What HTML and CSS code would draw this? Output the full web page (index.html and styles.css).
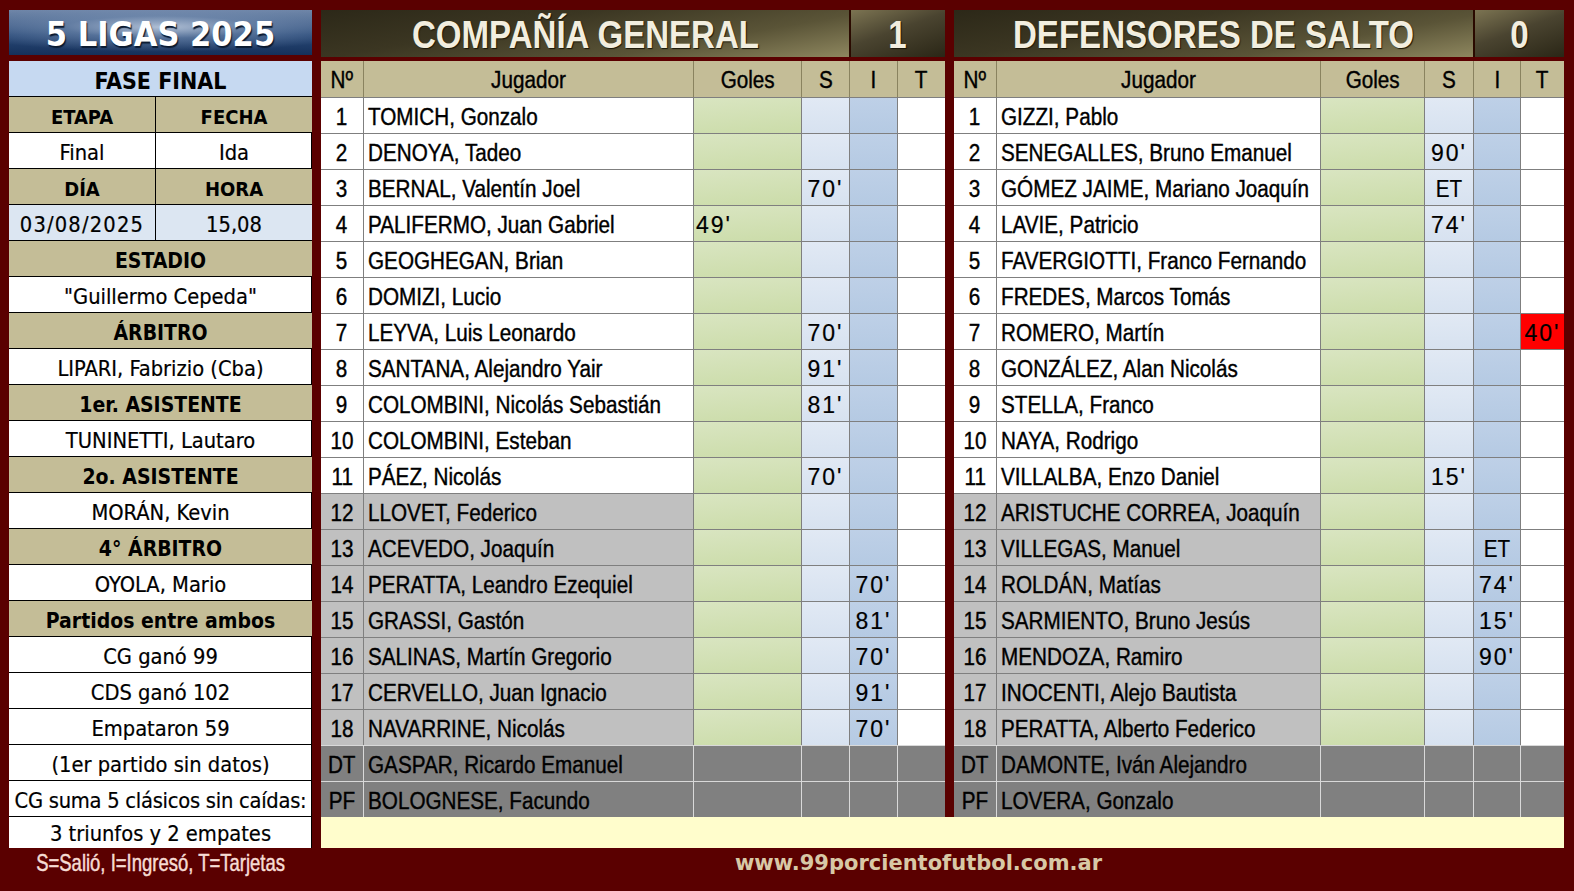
FILE: index.html
```html
<!DOCTYPE html>
<html lang="es">
<head>
<meta charset="utf-8">
<title>5 LIGAS 2025 - Compañía General vs Defensores de Salto</title>
<link rel="stylesheet" href="styles.css">
</head>
<body>
<div class="sheet">
  <div class="title-main">5 LIGAS 2025</div>

  <div class="team-head cols-a">
    <div class="team-name"><span class="nw">COMPAÑÍA GENERAL</span></div>
    <div class="team-score"><span class="nw">1</span></div>
  </div>

  <div class="team-head cols-b">
    <div class="team-name"><span class="nw">DEFENSORES DE SALTO</span></div>
    <div class="team-score"><span class="nw">0</span></div>
  </div>

  <div class="info">
    <div class="ic full blue bold big">FASE FINAL</div>
    <div class="ic tan bold mid sep">ETAPA</div><div class="ic tan bold mid">FECHA</div>
    <div class="ic sep">Final</div><div class="ic">Ida</div>
    <div class="ic tan bold mid sep">DÍA</div><div class="ic tan bold mid">HORA</div>
    <div class="ic pale sep date">03/08/2025</div><div class="ic pale">15,08</div>
    <div class="ic full tan bold">ESTADIO</div>
    <div class="ic full">"Guillermo Cepeda"</div>
    <div class="ic full tan bold">ÁRBITRO</div>
    <div class="ic full">LIPARI, Fabrizio (Cba)</div>
    <div class="ic full tan bold">1er. ASISTENTE</div>
    <div class="ic full">TUNINETTI, Lautaro</div>
    <div class="ic full tan bold">2o. ASISTENTE</div>
    <div class="ic full">MORÁN, Kevin</div>
    <div class="ic full tan bold">4° ÁRBITRO</div>
    <div class="ic full">OYOLA, Mario</div>
    <div class="ic full tan bold">Partidos entre ambos</div>
    <div class="ic full">CG ganó 99</div>
    <div class="ic full">CDS ganó 102</div>
    <div class="ic full">Empataron 59</div>
    <div class="ic full">(1er partido sin datos)</div>
    <div class="ic full tight">CG suma 5 clásicos sin caídas:</div>
    <div class="ic full last">3 triunfos y 2 empates</div>
  </div>

  <div class="roster cols-a">
    <div class="row head"><div class="c"><span class="nw">Nº</span></div><div class="c"><span class="nw">Jugador</span></div><div class="c"><span class="nw">Goles</span></div><div class="c"><span class="nw">S</span></div><div class="c"><span class="nw">I</span></div><div class="c"><span class="nw">T</span></div></div>
    <div class="row"><div class="c n"><span class="nw">1</span></div><div class="c p"><span class="nw">TOMICH, Gonzalo</span></div><div class="c g"></div><div class="c s"></div><div class="c i"></div><div class="c t"></div></div>
    <div class="row"><div class="c n"><span class="nw">2</span></div><div class="c p"><span class="nw">DENOYA, Tadeo</span></div><div class="c g"></div><div class="c s"></div><div class="c i"></div><div class="c t"></div></div>
    <div class="row"><div class="c n"><span class="nw">3</span></div><div class="c p"><span class="nw">BERNAL, Valentín Joel</span></div><div class="c g"></div><div class="c s">70'</div><div class="c i"></div><div class="c t"></div></div>
    <div class="row"><div class="c n"><span class="nw">4</span></div><div class="c p"><span class="nw">PALIFERMO, Juan Gabriel</span></div><div class="c g">49'</div><div class="c s"></div><div class="c i"></div><div class="c t"></div></div>
    <div class="row"><div class="c n"><span class="nw">5</span></div><div class="c p"><span class="nw">GEOGHEGAN, Brian</span></div><div class="c g"></div><div class="c s"></div><div class="c i"></div><div class="c t"></div></div>
    <div class="row"><div class="c n"><span class="nw">6</span></div><div class="c p"><span class="nw">DOMIZI, Lucio</span></div><div class="c g"></div><div class="c s"></div><div class="c i"></div><div class="c t"></div></div>
    <div class="row"><div class="c n"><span class="nw">7</span></div><div class="c p"><span class="nw">LEYVA, Luis Leonardo</span></div><div class="c g"></div><div class="c s">70'</div><div class="c i"></div><div class="c t"></div></div>
    <div class="row"><div class="c n"><span class="nw">8</span></div><div class="c p"><span class="nw">SANTANA, Alejandro Yair</span></div><div class="c g"></div><div class="c s">91'</div><div class="c i"></div><div class="c t"></div></div>
    <div class="row"><div class="c n"><span class="nw">9</span></div><div class="c p"><span class="nw">COLOMBINI, Nicolás Sebastián</span></div><div class="c g"></div><div class="c s">81'</div><div class="c i"></div><div class="c t"></div></div>
    <div class="row"><div class="c n"><span class="nw">10</span></div><div class="c p"><span class="nw">COLOMBINI, Esteban</span></div><div class="c g"></div><div class="c s"></div><div class="c i"></div><div class="c t"></div></div>
    <div class="row"><div class="c n"><span class="nw">11</span></div><div class="c p"><span class="nw">PÁEZ, Nicolás</span></div><div class="c g"></div><div class="c s">70'</div><div class="c i"></div><div class="c t"></div></div>
    <div class="row sub"><div class="c n"><span class="nw">12</span></div><div class="c p"><span class="nw">LLOVET, Federico</span></div><div class="c g"></div><div class="c s"></div><div class="c i"></div><div class="c t"></div></div>
    <div class="row sub"><div class="c n"><span class="nw">13</span></div><div class="c p"><span class="nw">ACEVEDO, Joaquín</span></div><div class="c g"></div><div class="c s"></div><div class="c i"></div><div class="c t"></div></div>
    <div class="row sub"><div class="c n"><span class="nw">14</span></div><div class="c p"><span class="nw">PERATTA, Leandro Ezequiel</span></div><div class="c g"></div><div class="c s"></div><div class="c i">70'</div><div class="c t"></div></div>
    <div class="row sub"><div class="c n"><span class="nw">15</span></div><div class="c p"><span class="nw">GRASSI, Gastón</span></div><div class="c g"></div><div class="c s"></div><div class="c i">81'</div><div class="c t"></div></div>
    <div class="row sub"><div class="c n"><span class="nw">16</span></div><div class="c p"><span class="nw">SALINAS, Martín Gregorio</span></div><div class="c g"></div><div class="c s"></div><div class="c i">70'</div><div class="c t"></div></div>
    <div class="row sub"><div class="c n"><span class="nw">17</span></div><div class="c p"><span class="nw">CERVELLO, Juan Ignacio</span></div><div class="c g"></div><div class="c s"></div><div class="c i">91'</div><div class="c t"></div></div>
    <div class="row sub"><div class="c n"><span class="nw">18</span></div><div class="c p"><span class="nw">NAVARRINE, Nicolás</span></div><div class="c g"></div><div class="c s"></div><div class="c i">70'</div><div class="c t"></div></div>
    <div class="row staff"><div class="c n"><span class="nw">DT</span></div><div class="c p"><span class="nw">GASPAR, Ricardo Emanuel</span></div><div class="c"></div><div class="c"></div><div class="c"></div><div class="c"></div></div>
    <div class="row staff"><div class="c n"><span class="nw">PF</span></div><div class="c p"><span class="nw">BOLOGNESE, Facundo</span></div><div class="c"></div><div class="c"></div><div class="c"></div><div class="c"></div></div>
  </div>

  <div class="roster cols-b">
    <div class="row head"><div class="c"><span class="nw">Nº</span></div><div class="c"><span class="nw">Jugador</span></div><div class="c"><span class="nw">Goles</span></div><div class="c"><span class="nw">S</span></div><div class="c"><span class="nw">I</span></div><div class="c"><span class="nw">T</span></div></div>
    <div class="row"><div class="c n"><span class="nw">1</span></div><div class="c p"><span class="nw">GIZZI, Pablo</span></div><div class="c g"></div><div class="c s"></div><div class="c i"></div><div class="c t"></div></div>
    <div class="row"><div class="c n"><span class="nw">2</span></div><div class="c p"><span class="nw">SENEGALLES, Bruno Emanuel</span></div><div class="c g"></div><div class="c s">90'</div><div class="c i"></div><div class="c t"></div></div>
    <div class="row"><div class="c n"><span class="nw">3</span></div><div class="c p"><span class="nw">GÓMEZ JAIME, Mariano Joaquín</span></div><div class="c g"></div><div class="c s"><span class="nw">ET</span></div><div class="c i"></div><div class="c t"></div></div>
    <div class="row"><div class="c n"><span class="nw">4</span></div><div class="c p"><span class="nw">LAVIE, Patricio</span></div><div class="c g"></div><div class="c s">74'</div><div class="c i"></div><div class="c t"></div></div>
    <div class="row"><div class="c n"><span class="nw">5</span></div><div class="c p"><span class="nw">FAVERGIOTTI, Franco Fernando</span></div><div class="c g"></div><div class="c s"></div><div class="c i"></div><div class="c t"></div></div>
    <div class="row"><div class="c n"><span class="nw">6</span></div><div class="c p"><span class="nw">FREDES, Marcos Tomás</span></div><div class="c g"></div><div class="c s"></div><div class="c i"></div><div class="c t"></div></div>
    <div class="row"><div class="c n"><span class="nw">7</span></div><div class="c p"><span class="nw">ROMERO, Martín</span></div><div class="c g"></div><div class="c s"></div><div class="c i"></div><div class="c t red">40'</div></div>
    <div class="row"><div class="c n"><span class="nw">8</span></div><div class="c p"><span class="nw">GONZÁLEZ, Alan Nicolás</span></div><div class="c g"></div><div class="c s"></div><div class="c i"></div><div class="c t"></div></div>
    <div class="row"><div class="c n"><span class="nw">9</span></div><div class="c p"><span class="nw">STELLA, Franco</span></div><div class="c g"></div><div class="c s"></div><div class="c i"></div><div class="c t"></div></div>
    <div class="row"><div class="c n"><span class="nw">10</span></div><div class="c p"><span class="nw">NAYA, Rodrigo</span></div><div class="c g"></div><div class="c s"></div><div class="c i"></div><div class="c t"></div></div>
    <div class="row"><div class="c n"><span class="nw">11</span></div><div class="c p"><span class="nw">VILLALBA, Enzo Daniel</span></div><div class="c g"></div><div class="c s">15'</div><div class="c i"></div><div class="c t"></div></div>
    <div class="row sub"><div class="c n"><span class="nw">12</span></div><div class="c p"><span class="nw">ARISTUCHE CORREA, Joaquín</span></div><div class="c g"></div><div class="c s"></div><div class="c i"></div><div class="c t"></div></div>
    <div class="row sub"><div class="c n"><span class="nw">13</span></div><div class="c p"><span class="nw">VILLEGAS, Manuel</span></div><div class="c g"></div><div class="c s"></div><div class="c i"><span class="nw">ET</span></div><div class="c t"></div></div>
    <div class="row sub"><div class="c n"><span class="nw">14</span></div><div class="c p"><span class="nw">ROLDÁN, Matías</span></div><div class="c g"></div><div class="c s"></div><div class="c i">74'</div><div class="c t"></div></div>
    <div class="row sub"><div class="c n"><span class="nw">15</span></div><div class="c p"><span class="nw">SARMIENTO, Bruno Jesús</span></div><div class="c g"></div><div class="c s"></div><div class="c i">15'</div><div class="c t"></div></div>
    <div class="row sub"><div class="c n"><span class="nw">16</span></div><div class="c p"><span class="nw">MENDOZA, Ramiro</span></div><div class="c g"></div><div class="c s"></div><div class="c i">90'</div><div class="c t"></div></div>
    <div class="row sub"><div class="c n"><span class="nw">17</span></div><div class="c p"><span class="nw">INOCENTI, Alejo Bautista</span></div><div class="c g"></div><div class="c s"></div><div class="c i"></div><div class="c t"></div></div>
    <div class="row sub"><div class="c n"><span class="nw">18</span></div><div class="c p"><span class="nw">PERATTA, Alberto Federico</span></div><div class="c g"></div><div class="c s"></div><div class="c i"></div><div class="c t"></div></div>
    <div class="row staff"><div class="c n"><span class="nw">DT</span></div><div class="c p"><span class="nw">DAMONTE, Iván Alejandro</span></div><div class="c"></div><div class="c"></div><div class="c"></div><div class="c"></div></div>
    <div class="row staff"><div class="c n"><span class="nw">PF</span></div><div class="c p"><span class="nw">LOVERA, Gonzalo</span></div><div class="c"></div><div class="c"></div><div class="c"></div><div class="c"></div></div>
  </div>

  <div class="cream"></div>

  <div class="legend"><span class="nw">S=Salió, I=Ingresó, T=Tarjetas</span></div>
  <div class="url">www.99porcientofutbol.com.ar</div>
</div>
</body>
</html>
```

FILE: styles.css
```css
* { box-sizing: border-box; }

html, body {
  margin: 0;
  padding: 0;
  background: #5a0000;
}

body {
  width: 1574px;
  height: 891px;
  overflow: hidden;
  font-family: "DejaVu Sans Condensed", "DejaVu Sans", sans-serif;
  color: #000;
}

.sheet {
  display: grid;
  grid-template-columns: 303px 624px 610px;
  grid-template-rows: 51px 756px 31px 43px;
  column-gap: 9px;
  padding: 10px 0 0 9px;
}

/* narrow (Arial Narrow-like) text */
.nw {
  display: inline-block;
  font-family: "Liberation Sans", Arial, sans-serif;
  white-space: nowrap;
  transform: scaleX(0.88);
  transform-origin: center center;
}

/* ---------- titles ---------- */
.title-main {
  height: 45px;
  display: flex;
  align-items: center;
  justify-content: center;
  padding-top: 3px;
  font-family: "DejaVu Sans Condensed", "DejaVu Sans", sans-serif;
  font-weight: bold;
  font-size: 34px;
  color: #fff;
  text-shadow: 1px 2px 1px #0b1a30;
  background:
    radial-gradient(ellipse 70% 55% at 50% 38%, rgba(195,208,226,0.85) 0%, rgba(120,145,180,0.55) 45%, rgba(30,58,100,0) 100%),
    linear-gradient(#6f86a8 0%, #2a4a78 55%, #15305a 100%);
}

.team-head {
  height: 45px;
  display: grid;
}
.team-name, .team-score {
  display: flex;
  align-items: center;
  justify-content: center;
  padding-top: 4px;
  font-weight: bold;
  font-size: 38px;
  color: #f2eedf;
  text-shadow: 1px 1px 1px #1a1608;
}
.team-name .nw, .team-score .nw { transform: scaleX(0.87); }
.team-name {
  grid-column: 1 / 5;
  background: linear-gradient(170deg, #2c2818 0%, #3b3622 35%, #5a5437 70%, #8e875f 100%);
}
.team-score {
  grid-column: 5 / 7;
  border-left: 2px solid #2a0a00;
  background: linear-gradient(160deg, #7c7452 0%, #4a4430 45%, #2a2616 100%);
}

/* ---------- column templates ---------- */
.cols-a, .cols-a .row { grid-template-columns: 42px 330px 108px 48px 48px 48px; }
.cols-b, .cols-b .row { grid-template-columns: 42px 324px 104px 49px 47px 44px; }

/* ---------- info panel ---------- */
.info {
  grid-row: 2 / 4;
  display: grid;
  grid-template-columns: 147px 156px;
  grid-auto-rows: 36px;
  background: #fff;
  border-right: 1px solid #000;
}
.ic {
  display: flex;
  align-items: center;
  justify-content: center;
  padding-top: 4px;
  border-bottom: 1px solid #000;
  font-size: 21.7px;
  white-space: nowrap;
  -webkit-text-stroke: 0.2px #000;
}
.info .ic.full { grid-column: 1 / 3; }
.ic.sep { border-right: 1px solid #000; }
.ic.tan { background: #c4bd97; }
.ic.blue { background: #c6d9f1; }
.ic.pale { background: #dce6f2; }
.ic.bold { font-weight: bold; font-size: 21px; -webkit-text-stroke: 0; }
.ic.big { font-size: 23px; }
.ic.mid { font-size: 20px; }
.ic.date { letter-spacing: 1.2px; }
.ic.tight { letter-spacing: -0.25px; }
.ic.last { height: 31px; border-bottom: none; padding-top: 1px; }

/* ---------- rosters ---------- */
.roster {
  display: flex;
  flex-direction: column;
  font-family: "Liberation Sans", Arial, sans-serif;
  font-size: 23.5px;
  -webkit-text-stroke: 0.4px #000;
}
.row {
  display: grid;
  height: 36px;
  background: #fff;
}
.row + .row > .c { border-top: 1px solid #7f7f7f; }
.c {
  display: flex;
  align-items: center;
  justify-content: center;
  padding-top: 3px;
  white-space: nowrap;
}
.c + .c { border-left: 1px solid #7f7f7f; }

.row.head { background: #c4bd97; }
.row.head .c + .c { border-left-color: #8a835f; }

.c.p { justify-content: flex-start; padding-left: 4px; }
.c.p .nw { transform-origin: left center; }
.c.s, .c.i, .c.t, .c.g { letter-spacing: 2px; font-size: 23px; -webkit-text-stroke: 0.2px #000; }
.c.s .nw, .c.i .nw { letter-spacing: 0; font-size: 23.5px; }
.c.g {
  justify-content: flex-start;
  padding-left: 2px;
  background: linear-gradient(175deg, #d9e5c1 0%, #cbdca9 100%);
}
.c.s { background: linear-gradient(#e1e9f4, #d7e2f0); }
.c.i { background: linear-gradient(#bed0e7, #b5cae3); }
.c.t { background: #fff; }
.c.t.red { background: #ff0000; }

.row.sub .c.n, .row.sub .c.p { background: #c0c0c0; }

.row.staff { background: #808080; }
.row.staff > .c { border-top-color: #d9d9d9; }
.row.staff .c + .c { border-left-color: #d9d9d9; }

.cream {
  grid-column: 2 / 4;
  grid-row: 3;
  background: #fffdcc;
}

/* ---------- footer ---------- */
.legend {
  grid-column: 1;
  grid-row: 4;
  display: flex;
  justify-content: center;
  padding-top: 1px;
  font-size: 24px;
  color: #f6dcd4;
  -webkit-text-stroke: 0.5px #f6dcd4;
}
.legend .nw { transform: scaleX(0.77); }
.url {
  grid-column: 2 / 4;
  grid-row: 4;
  display: flex;
  justify-content: center;
  padding-right: 48px;
  padding-top: 3px;
  font-family: "DejaVu Sans", sans-serif;
  font-weight: bold;
  font-size: 21px;
  color: #d8c8a6;
}
```
